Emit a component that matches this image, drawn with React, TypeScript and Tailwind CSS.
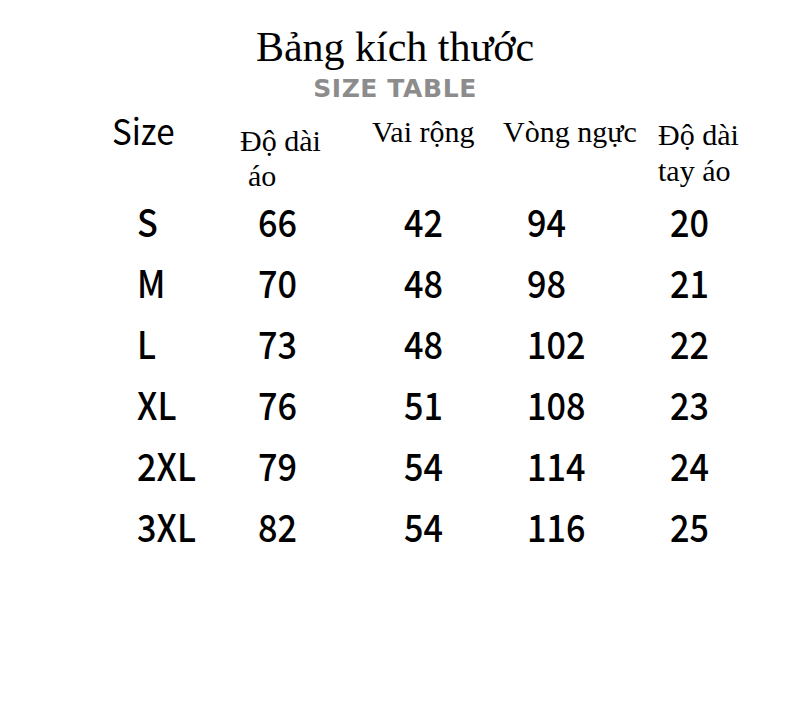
import React from "react";

const rows = [
  ["S", "66", "42", "94", "20"],
  ["M", "70", "48", "98", "21"],
  ["L", "73", "48", "102", "22"],
  ["XL", "76", "51", "108", "23"],
  ["2XL", "79", "54", "114", "24"],
  ["3XL", "82", "54", "116", "25"],
];

const sans = "font-['Noto_Sans_CJK_SC','Noto_Sans',sans-serif]";
const serif = "font-['Liberation_Serif','Times_New_Roman',serif]";

export default function App() {
  return (
    <div className="w-[790px] h-[717px] bg-white text-black overflow-hidden">
      <div className="flex flex-col items-center pt-[25px]">
        <h1 className={`${serif} text-[42px] leading-[44px] font-normal`}>Bảng kích thước</h1>
        <div className="font-['DejaVu_Sans',sans-serif] font-black text-[25px] leading-[26px] tracking-[0.6px] text-[#8c8c8c] mt-[7px]">
          SIZE TABLE
        </div>
      </div>
      <div className="flex items-start pl-[112px] mt-[5px] h-[83px]">
        <div className={`${sans} w-[128px] text-[36px] leading-[40px] mt-[2px]`}>
          <span className="inline-block scale-x-[0.92] origin-left">Size</span>
        </div>
        <div className={`${serif} w-[132px] text-[30px] leading-[35px] mt-[16px]`}>
          Độ dài<br /><span className="pl-[8px]">áo</span>
        </div>
        <div className={`${serif} w-[131px] text-[30px] leading-[35px] mt-[7px]`}>Vai rộng</div>
        <div className={`${serif} w-[155px] text-[30px] leading-[35px] mt-[7px]`}>Vòng ngực</div>
        <div className={`${serif} text-[30px] leading-[36px] mt-[10px]`}>
          Độ dài<br />tay áo
        </div>
      </div>
      <div className={`${sans} pl-[137px]`}>
        {rows.map((r) => (
          <div key={r[0]} className="grid grid-cols-[121px_146px_123px_143px_1fr] h-[61px] items-center text-[38px] font-medium leading-none">
            {r.map((c, i) => (
              <div key={i}>
                <span className="inline-block scale-x-[0.9] origin-left">{c}</span>
              </div>
            ))}
          </div>
        ))}
      </div>
    </div>
  );
}
